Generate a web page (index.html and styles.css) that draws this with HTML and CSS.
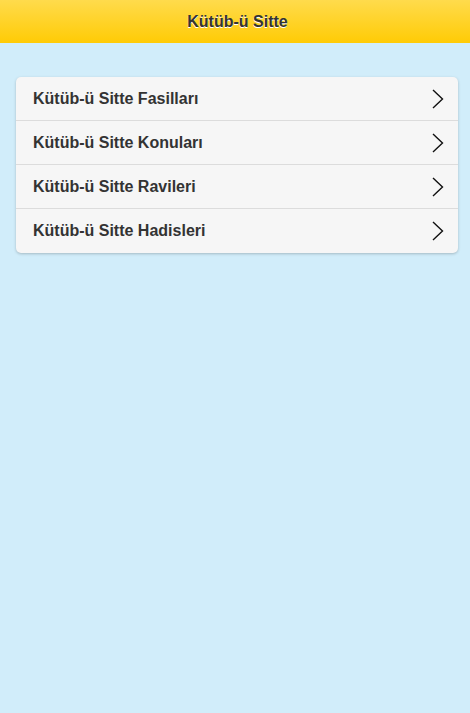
FILE: index.html
```html
<!DOCTYPE html>
<html lang="tr">
<head>
<meta charset="utf-8">
<title>Kütüb-ü Sitte</title>
<link rel="stylesheet" href="styles.css">
</head>
<body>
<header class="topbar"><h1 class="title">Kütüb-ü Sitte</h1></header>
<main class="content">
  <ul class="list">
    <li class="item"><span class="label">Kütüb-ü Sitte Fasilları</span><svg class="chev" width="12" height="20" viewBox="0 0 12 20"><polyline points="1,1 10.5,10 1,19" fill="none" stroke="#111" stroke-width="1.4"/></svg></li>
    <li class="item"><span class="label">Kütüb-ü Sitte Konuları</span><svg class="chev" width="12" height="20" viewBox="0 0 12 20"><polyline points="1,1 10.5,10 1,19" fill="none" stroke="#111" stroke-width="1.4"/></svg></li>
    <li class="item"><span class="label">Kütüb-ü Sitte Ravileri</span><svg class="chev" width="12" height="20" viewBox="0 0 12 20"><polyline points="1,1 10.5,10 1,19" fill="none" stroke="#111" stroke-width="1.4"/></svg></li>
    <li class="item"><span class="label">Kütüb-ü Sitte Hadisleri</span><svg class="chev" width="12" height="20" viewBox="0 0 12 20"><polyline points="1,1 10.5,10 1,19" fill="none" stroke="#111" stroke-width="1.4"/></svg></li>
  </ul>
</main>
</body>
</html>
```
FILE: styles.css
```css
html, body {
  margin: 0;
  padding: 0;
  height: 100%;
}
body {
  background: #d1edfa;
  font-family: "Liberation Sans", Arial, sans-serif;
  color: #333;
}
.topbar {
  height: 43px;
  background: linear-gradient(#ffdb4c, #ffcb05);
  display: flex;
  align-items: center;
  justify-content: center;
  padding-left: 5px;
}
.title {
  margin: 0;
  font-size: 16px;
  font-weight: bold;
  color: #333;
  text-shadow: 0 1px 0 #fff;
}
.content {
  padding: 34px 12px 0 16px;
}
.list {
  list-style: none;
  margin: 0;
  padding: 0;
  background: #f6f6f6;
  border-radius: 5px;
  box-shadow: 0 1px 3px rgba(0,0,0,0.22);
  overflow: hidden;
}
.item {
  height: 44px;
  box-sizing: border-box;
  display: flex;
  align-items: center;
  justify-content: space-between;
  padding: 0 14px 0 17px;
  border-bottom: 1px solid #dcdcdc;
}
.item:last-child {
  border-bottom: none;
}
.label {
  font-size: 16px;
  font-weight: bold;
  color: #333;
}
.chev {
  display: block;
}
```
